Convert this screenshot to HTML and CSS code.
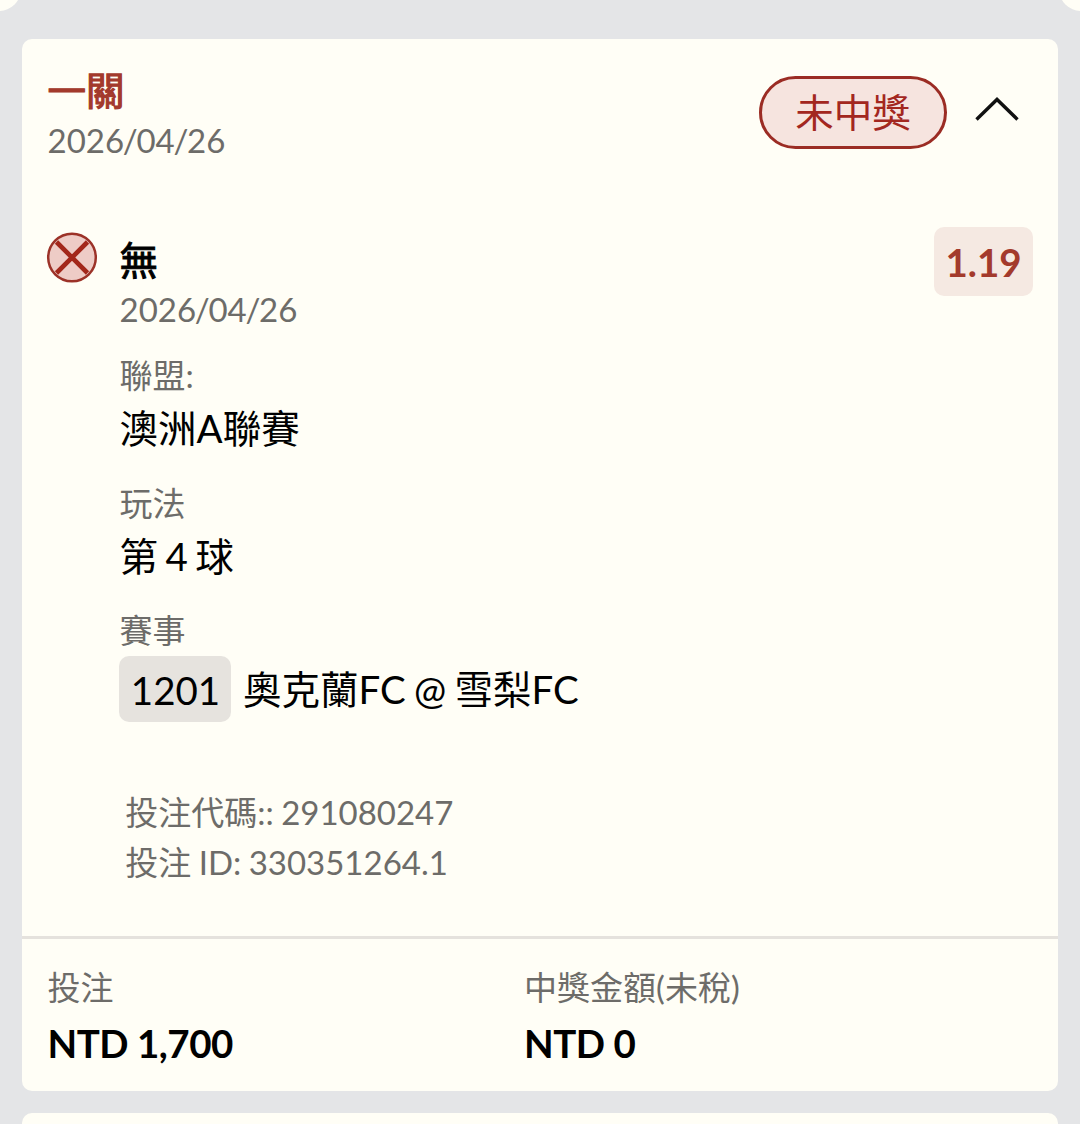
FILE: index.html
```html
<!DOCTYPE html>
<html lang="zh-Hant">
<head>
    <meta charset="UTF-8">
    <meta name="viewport" content="width=device-width, initial-scale=1.0">
    <title>投注紀錄</title>
    <link rel="stylesheet" href="styles.css">
</head>
<body>
    <span class="notch notch-left"></span>
    <span class="notch notch-right"></span>

    <div class="card">
        <div class="card-header">
            <div>
                <div class="title">一關</div>
                <div class="date">2026<span class="slash">/</span>04<span class="slash">/</span>26</div>
            </div>
            <div class="header-right">
                <span class="status">未中獎</span>
                <svg class="chevron" width="46" height="28" viewBox="0 0 46 28" fill="none" stroke="#111" stroke-width="3.4">
                    <path d="M2.5 24.5 L23 4.5 L43.5 24.5" />
                </svg>
            </div>
        </div>

        <div class="leg">
            <svg class="lost-icon" width="52" height="52" viewBox="0 0 52 52">
                <circle cx="26" cy="26.5" r="23.8" fill="#eeccc6" stroke="#9c3228" stroke-width="2.5" />
                <path d="M10.5 11 L41.5 42 M41.5 11 L10.5 42" stroke="#a3281b" stroke-width="4.6" />
            </svg>
            <div class="leg-body">
                <div class="pick">無</div>
                <div class="date">2026<span class="slash">/</span>04<span class="slash">/</span>26</div>

                <div class="field first">
                    <div class="label">聯盟:</div>
                    <div class="value">澳洲A聯賽</div>
                </div>
                <div class="field">
                    <div class="label">玩法</div>
                    <div class="value">第 4 球</div>
                </div>
                <div class="field">
                    <div class="label">賽事</div>
                    <div class="match">
                        <span class="match-code">1201</span>
                        <span class="teams">奧克蘭FC @ 雪梨FC</span>
                    </div>
                </div>

                <div class="ids">
                    <div>投注代碼:: 291080247</div>
                    <div>投注 ID: 330351264.1</div>
                </div>
            </div>
            <div class="odds">1.19</div>
        </div>

        <div class="card-footer">
            <div class="col">
                <div class="label">投注</div>
                <div class="amount">NTD 1,700</div>
            </div>
            <div class="col">
                <div class="label">中獎金額(未稅)</div>
                <div class="amount">NTD 0</div>
            </div>
        </div>
    </div>

    <div class="card next"></div>
</body>
</html>
```

FILE: styles.css
```css
* {
    box-sizing: border-box;
}

body {
    position: relative;
    margin: 0;
    padding: 39px 22px 0;
    height: 1124px;
    overflow: hidden;
    background-color: #e4e5e7;
    font-family: Lato, "Noto Sans CJK TC", sans-serif;
    font-size: 38.5px;
    color: #000;
}

/* round corners of the panel above */
.notch {
    position: absolute;
    top: -33px;
    width: 44px;
    height: 44px;
    border-radius: 50%;
    background-color: #fffef6;
}

.notch-left {
    left: -23px;
}

.notch-right {
    right: -23px;
}

.card {
    height: 1052px;
    border-radius: 10px;
    background-color: #fffef6;
}

.card.next {
    margin-top: 22px;
    height: 60px;
}

.card-header {
    display: flex;
    justify-content: space-between;
    height: 188px;
    padding: 27px 38px 0 25.6px;
}

.title {
    line-height: 49px;
    color: #a33a2c;
    -webkit-text-stroke: 1.2px #a33a2c;
}

.date {
    font-size: 33px;
    line-height: 50px;
    color: #6d6c69;
}

.slash {
    margin: 0 -1.3px;
}

.header-right {
    display: flex;
    align-items: flex-start;
    gap: 27px;
    padding-top: 10px;
}

.status {
    width: 188px;
    height: 73px;
    border: 3px solid #9b2c24;
    border-radius: 37px;
    background-color: #f6e4df;
    color: #a3271f;
    line-height: 67px;
    text-align: center;
}

.chevron {
    margin-top: 19px;
}

.leg {
    display: flex;
    align-items: flex-start;
    height: 709px;
    padding: 0 25px 0 24px;
}

.lost-icon {
    margin-top: 4px;
}

.leg-body {
    flex: 1;
    padding: 9px 0 0 21.6px;
}

.pick {
    line-height: 48px;
    -webkit-text-stroke: 1px #000;
}

.field {
    margin-top: 21px;
}

.field.first {
    margin-top: 16px;
}

.label {
    font-size: 33px;
    line-height: 50px;
    color: #6d6c69;
}

.value {
    line-height: 56px;
    word-spacing: -2.5px;
}

.field.first .value {
    line-height: 57px;
}

.match {
    display: flex;
    align-items: center;
    gap: 12px;
    margin: 1px 0 0 -0.6px;
}

.match-code {
    width: 112px;
    height: 66px;
    border-radius: 10px;
    background-color: #e6e3de;
    line-height: 68px;
    padding-left: 1px;
    text-align: center;
}

.teams {
    line-height: 66px;
    word-spacing: -1.6px;
}

.ids {
    margin: 65px 0 0 5.6px;
    font-size: 33px;
    line-height: 50px;
    color: #6d6c69;
    word-spacing: -1px;
}

.odds {
    width: 99px;
    height: 69px;
    border-radius: 10px;
    background-color: #f5e9e2;
    color: #a33a2c;
    font-weight: bold;
    line-height: 70px;
    text-align: center;
}

.card-footer {
    display: flex;
    padding: 23px 25.6px 0;
    border-top: 3px solid #e5e2dd;
}

.col {
    width: 476.5px;
}

.amount {
    font-weight: bold;
    line-height: 62px;
    letter-spacing: -0.5px;
}
```
